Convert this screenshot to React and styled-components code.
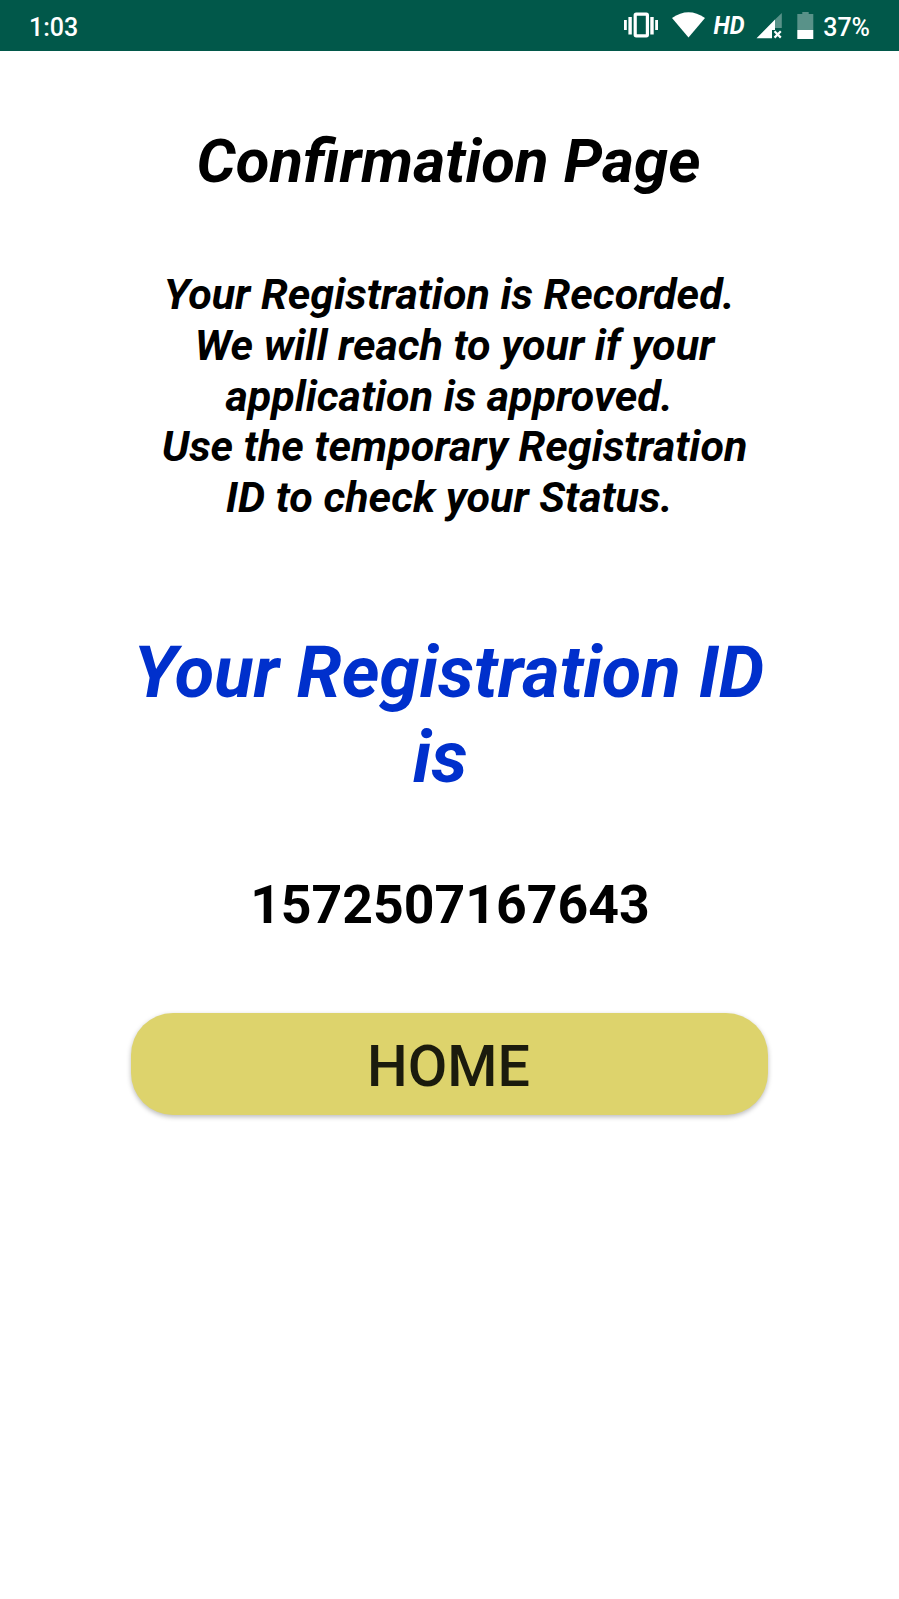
import React from 'react';
import styled, { createGlobalStyle } from 'styled-components';

const Global = createGlobalStyle`
  * { box-sizing: border-box; }
  body { margin: 0; background: #fff; font-family: Roboto, sans-serif; }
`;
const Screen = styled.main`
  width: 899px;
  height: 1599px;
  background: #fff;
  display: flex;
  flex-direction: column;
  align-items: center;
  overflow: hidden;
`;
const StatusBar = styled.header`
  width: 100%;
  height: 51px;
  flex: none;
  padding: 0 29px;
  background: #01584a;
  color: #fff;
  display: flex;
  align-items: center;
  justify-content: space-between;
`;
const StatusText = styled.span`
  font-size: 25px;
  font-weight: 500;
  line-height: 47px;
  padding-top: 4px;
`;
const StatusIcons = styled.svg`
  display: block;
  margin-left: auto;
  margin-right: 9px;
`;
const Title = styled.h1`
  margin: 75px 0 0;
  padding-right: 2px;
  font-size: 61.7px;
  line-height: 71px;
  font-weight: 700;
  font-style: italic;
  color: #000;
  white-space: pre;
`;
const Message = styled.p`
  margin: 73px 0 0;
  padding-left: 10px;
  font-size: 43.05px;
  line-height: 50.75px;
  font-weight: 700;
  font-style: italic;
  text-align: center;
  color: #000;
`;
const Line = styled.span`
  display: block;
  white-space: pre;
`;
const IdLabel = styled.h2`
  margin: 106px 0 0;
  padding-right: 1px;
  font-size: 72.2px;
  line-height: 85px;
  font-weight: 700;
  font-style: italic;
  text-align: center;
  color: #0030cc;
`;
const IdValue = styled.div`
  margin-top: 73px;
  padding-left: 1px;
  font-size: 53.6px;
  line-height: 64px;
  font-weight: 700;
  color: #000;
`;
const HomeButton = styled.button`
  margin-top: 76px;
  padding: 6px 2px 0 0;
  width: 637px;
  height: 102px;
  border: 0;
  border-radius: 42px;
  background: #ddd36c;
  color: #1b1b0d;
  font: 500 57.4px/96px Roboto, sans-serif;
  box-shadow: 0 2px 5px rgba(0,0,0,.27);
`;

export default function App() {
  return (
    <Screen>
      <Global />
      <StatusBar>
        <StatusText>1:03</StatusText>
        <StatusIcons width="192" height="51" viewBox="622 0 192 51" fill="#fff">
          <path d="M624 20h2.8v10H624zM628.4 17h3.4v17.5h-3.4zM650.3 17h3.4v17.5h-3.4zM655.2 20h2.8v10h-2.8z" />
          <rect x="635.2" y="14.2" width="12.2" height="21.6" rx="1" fill="none" stroke="#fff" strokeWidth="3.2" />
          <path d="M672 18Q688.5 6.5 705 18L688.5 37.5Z" />
          <text x="713.5" y="34" fontFamily="Roboto" fontSize="26" fontStyle="italic" fontWeight="700" textLength="31" lengthAdjust="spacingAndGlyphs">HD</text>
          <path d="M756.5 38.3L775 19.5V30H772V38.3Z" />
          <path d="M775 19.5L781.8 13V28H775Z" opacity=".35" />
          <path d="M774.5 31.3l6.3 6.3M780.8 31.3l-6.3 6.3" fill="none" stroke="#fff" strokeWidth="2.2" />
          <path d="M797.3 14h5v-2h6.4v2h4.6v16h-16z" opacity=".35" />
          <path d="M797.3 30h16v9h-16z" />
        </StatusIcons>
        <StatusText>37%</StatusText>
      </StatusBar>
      <Title>Confirmation Page</Title>
      <Message>
        <Line>Your Registration is Recorded. </Line>
        <Line>We will reach to your if your</Line>
        <Line>application is approved. </Line>
        <Line>Use the temporary Registration</Line>
        <Line>ID to check your Status. </Line>
      </Message>
      <IdLabel>
        <Line>Your Registration ID</Line>
        <Line>is </Line>
      </IdLabel>
      <IdValue>1572507167643</IdValue>
      <HomeButton>HOME</HomeButton>
    </Screen>
  );
}
